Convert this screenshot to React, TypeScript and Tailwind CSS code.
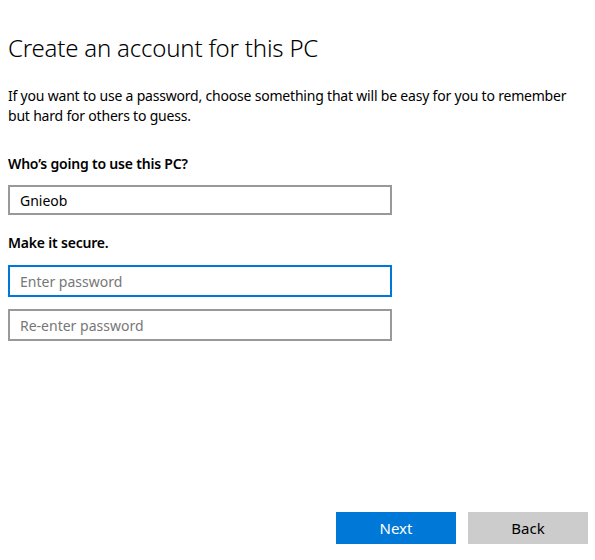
export default function App() {
  const font = { fontFamily: '"Segoe UI", "Noto Sans", sans-serif' };
  return (
    <div className="w-[595px] h-[560px] bg-white flex flex-col text-[#000] px-[8px]" style={font}>
      <h1 className="mt-[32px] text-[24px] leading-[32px] font-light tracking-[-0.2px]">Create an account for this PC</h1>
      <p className="mt-[22px] text-[14px] leading-[20px] tracking-[-0.2px]">
        If you want to use a password, choose something that will be easy for you to remember
        <br />but hard for others to guess.
      </p>
      <div className="mt-[28px] text-[14px] leading-[20px] font-semibold tracking-[-0.2px]">Who’s going to use this PC?</div>
      <div className="mt-[11px] w-[384px] h-[30px] border-2 border-[#999] flex items-center px-[10px] text-[14px]">Gnieob</div>
      <div className="mt-[18px] text-[14px] leading-[20px] font-semibold tracking-[-0.2px]">Make it secure.</div>
      <div className="mt-[12px] w-[384px] h-[32px] border-2 border-[#0078d7] flex items-center px-[10px] text-[14px] text-[#777]">Enter password</div>
      <div className="mt-[12px] w-[384px] h-[32px] border-2 border-[#999] flex items-center px-[10px] text-[14px] text-[#777]">Re-enter password</div>
      <div className="flex-1" />
      <div className="flex justify-end gap-[12px] mb-[16px] pr-[-1px] mr-[-1px]">
        <div className="w-[120px] h-[32px] bg-[#0078d7] text-white text-[15px] flex items-center justify-center">Next</div>
        <div className="w-[120px] h-[32px] bg-[#cccccc] text-[#000] text-[15px] flex items-center justify-center">Back</div>
      </div>
    </div>
  );
}
